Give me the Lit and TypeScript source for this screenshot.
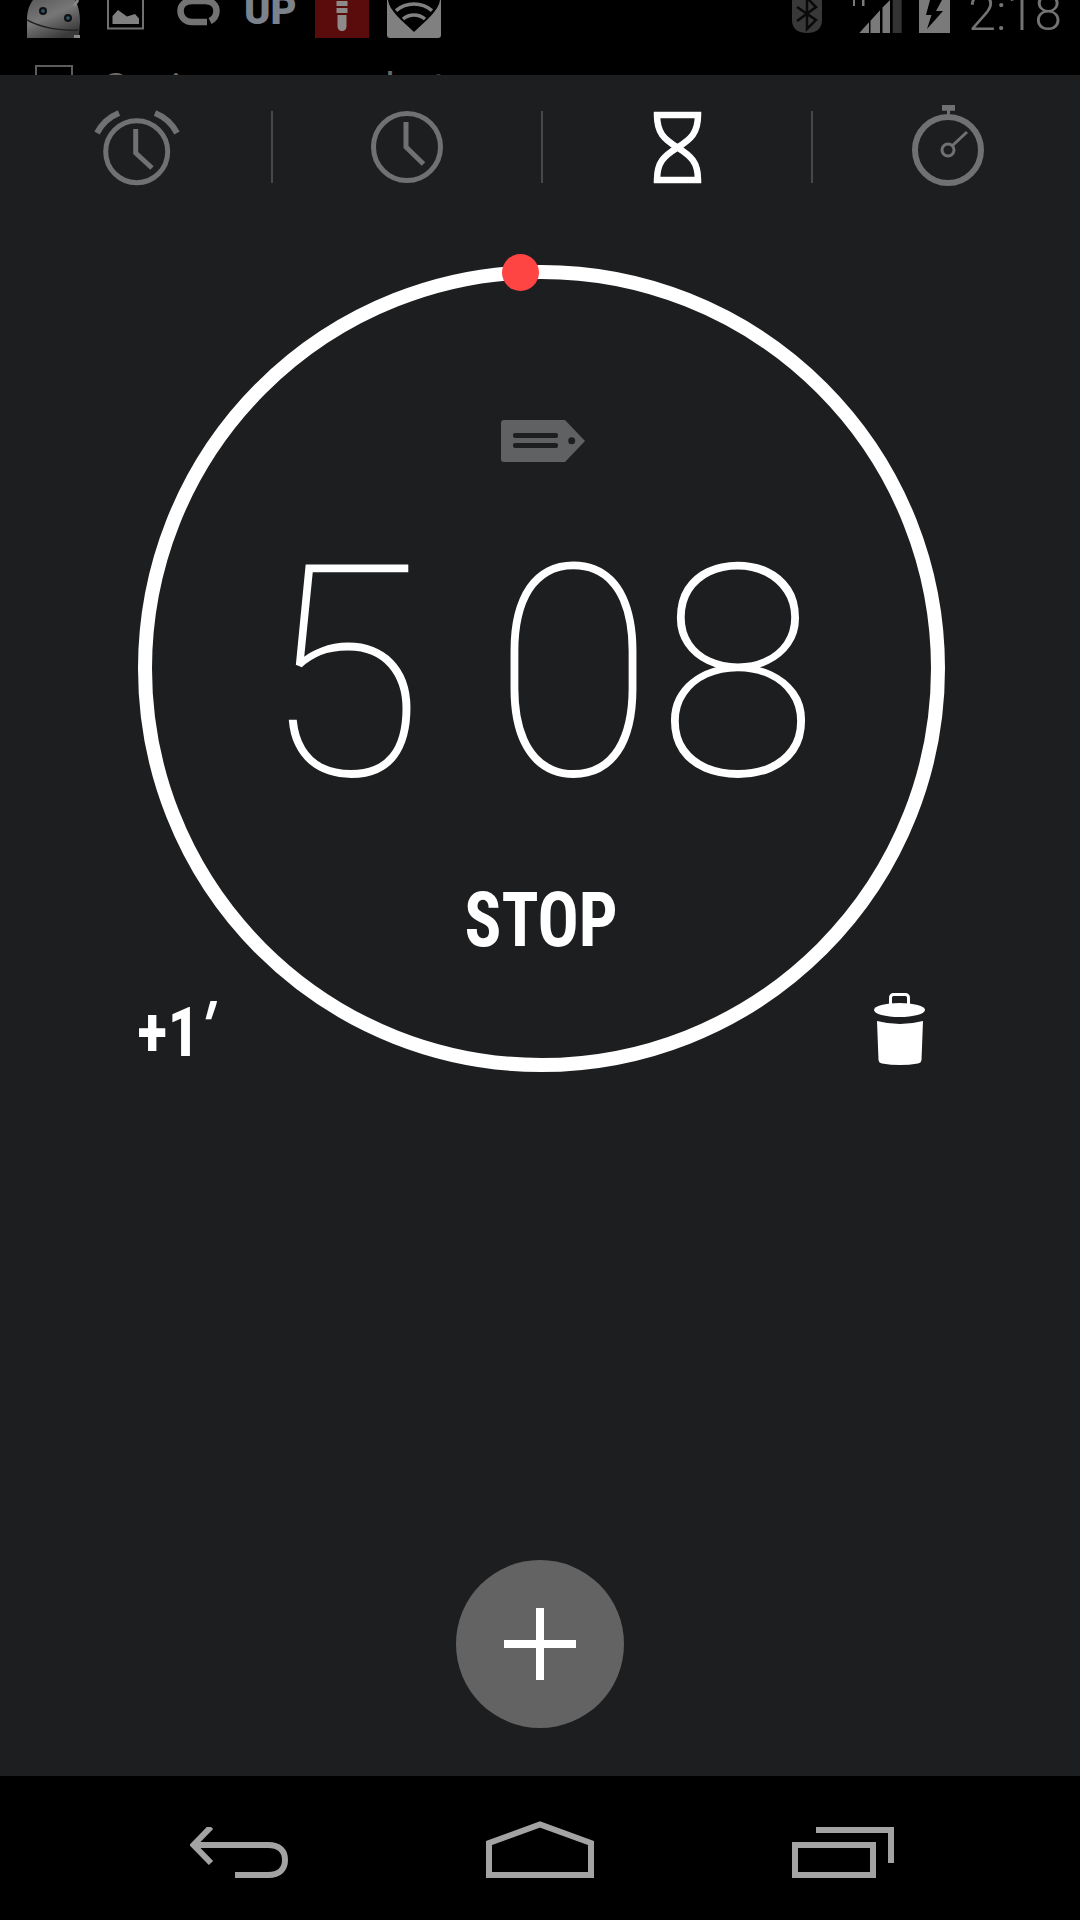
import { LitElement, html, css } from "lit";
import { customElement } from "lit/decorators.js";

@customElement("app-root")
export class AppRoot extends LitElement {
  static styles = css`
    :host {
      display: block;
      width: 1080px;
      height: 1920px;
      background: #000;
      font-family: Roboto, "Liberation Sans", sans-serif;
      overflow: hidden;
    }
    .page { display: flex; flex-direction: column; width: 1080px; height: 1920px; }
    svg { display: block; flex: none; overflow: hidden; }

    .status { height: 75px; flex: none; overflow: hidden; background: #000; }
    .icons { display: flex; align-items: flex-start; height: 38px; overflow: hidden; padding-left: 27px; }
    .android { width: 53px; height: 38px; }
    .picture { width: 37px; height: 30px; margin-left: 27px; }
    .ring { width: 43px; height: 26px; margin-left: 33px; }
    .up {
      width: 52px; margin-left: 24px; margin-top: -9px;
      font-size: 40px; line-height: 40px; font-weight: 900; color: #7c828c;
    }
    .red { width: 54px; height: 38px; margin-left: 19px; }
    .wifi { width: 54px; height: 38px; margin-left: 18px; }
    .right { display: flex; align-items: flex-start; margin-left: auto; padding-right: 18px; }
    .bt { width: 30px; height: 33px; }
    .signal { width: 52px; height: 33px; margin-left: 30px; }
    .battery { width: 31px; height: 33px; margin-left: 15px; }
    .clock {
      margin-left: 18px; margin-top: -12px;
      font-size: 50px; line-height: 50px; font-weight: 300; color: #737373;
    }
    .ghost { display: flex; align-items: flex-start; height: 37px; padding-left: 35px; padding-top: 27px; }
    .ghost .box { width: 34px; height: 34px; border: 2px solid #5c5c5c; flex: none; }
    .ghost .text {
      margin-left: 30px; margin-top: -1px;
      font-size: 42px; line-height: 50px; color: #6a6a6a; white-space: nowrap;
    }

    .main { flex: 1; display: flex; flex-direction: column; background: #1d1e20; }
    .tabs { display: flex; align-items: flex-start; padding: 27px 0 0 2.5px; height: 90px; flex: none; }
    .tab { flex: none; width: 268.33px; height: 90px; display: flex; justify-content: center; }
    .tab svg { width: 90px; height: 90px; }
    .divider { flex: none; width: 2px; height: 72px; margin-top: 9px; background: #47484a; }

    .dial {
      position: relative; box-sizing: border-box;
      width: 807px; height: 807px; margin: 73px 0 0 137.5px; flex: none;
      border: 14px solid #fff; border-radius: 50%;
      display: flex; flex-direction: column; align-items: center;
      padding-top: 141px; color: #fff;
    }
    .tag { width: 84px; height: 42px; margin-left: 3px; }
    .time {
      display: flex; gap: 66px; margin-top: 72px; margin-left: 1px;
      font-size: 296px; line-height: 280px; font-weight: 130; height: 280px; letter-spacing: 2px;
    }
    .stop {
      margin-top: 69px; font-size: 76px; line-height: 74px; font-weight: 700;
      font-stretch: 75%; transform: scaleX(0.9);
    }
    .dot {
      position: absolute; left: 350px; top: -25px;
      width: 37px; height: 37px; border-radius: 50%; background: #ff4444;
    }
    .plus1 {
      position: absolute; left: -15px; top: 722px;
      font-size: 68px; line-height: 65px; font-weight: 700; font-stretch: 75%;
      white-space: nowrap; transform: scaleX(0.94); transform-origin: left center;
    }
    .prime { display: inline-block; font-weight: 700; margin-left: 1px; transform: translateY(-4px) skewX(-16deg); }
    .trash { position: absolute; left: 718px; top: 711px; width: 60px; height: 80px; }

    .fab {
      width: 168px; height: 168px; border-radius: 50%; background: #636363;
      margin: auto 0 48px 456px; display: flex; align-items: center; justify-content: center; flex: none;
    }
    .fab svg { width: 72px; height: 72px; }

    .nav {
      height: 144px; flex: none; background: #000; display: flex; justify-content: center;
      align-items: flex-end; gap: 198px; padding: 0 0 42px 4px; box-sizing: border-box;
    }
    .back { width: 98px; height: 51px; }
    .home { width: 108px; height: 57px; }
    .recents { width: 102px; height: 51px; }
  `;

  render() {
    return html`
      <div class="page">
        <div class="status">
          <div class="icons">
            <svg class="android" viewBox="0 0 53 38">
              <defs>
                <linearGradient id="ag" x1="0" y1="0" x2="0.6" y2="1">
                  <stop offset="0" stop-color="#5a5a5a" /><stop offset="0.5" stop-color="#777" /><stop offset="1" stop-color="#3a3a3a" />
                </linearGradient>
              </defs>
              <path d="M0 38 V20 C0 10 3 4 6 0 H48 C51 5 53 12 53 22 L52 35 H47 V38 Z" fill="url(#ag)" />
              <path d="M0 20 C14 28 34 31 51 30" fill="none" stroke="#222" stroke-width="1.5" />
              <circle cx="16" cy="11" r="4" fill="#111" /><circle cx="16" cy="11" r="1.8" fill="#2d5a70" />
              <circle cx="41" cy="18" r="4" fill="#111" /><circle cx="41" cy="18" r="1.8" fill="#2d5a70" />
              <path d="M47 6 L51 0" stroke="#888" stroke-width="3" />
              <rect x="47" y="35" width="6" height="3" fill="#8a8a8a" />
            </svg>
            <svg class="picture" viewBox="0 0 37 30">
              <path d="M1 -2 V28.5 H36 V-2" fill="none" stroke="#707070" stroke-width="2" />
              <path d="M5.5 24 V16 L11 10 L20 16.5 L28 14 L32 18.5 V24 Z" fill="#808080" />
            </svg>
            <svg class="ring" viewBox="0 0 43 26">
              <path d="M30 22 H15 C8 22 3.5 17 3.5 11 C3.5 5 8 1 15 1 H28 C35 1 39.5 5 39.5 11 C39.5 16 37 19 33 21" fill="none" stroke="#737373" stroke-width="6.5" />
            </svg>
            <div class="up">UP</div>
            <svg class="red" viewBox="0 0 54 38">
              <rect width="54" height="38" fill="#5a0b0b" />
              <rect x="21.5" y="1" width="11" height="5" fill="#8f8a8a" />
              <rect x="21.5" y="8" width="11" height="5" fill="#8f8a8a" />
              <path d="M22.5 15 H31.5 V26 C31.5 30 29 31 27 31 C25 31 22.5 30 22.5 26 Z" fill="#8f8a8a" />
            </svg>
            <svg class="wifi" viewBox="0 0 54 38">
              <path d="M0 0 H54 V35 Q54 38 51 38 H3 Q0 38 0 35 Z" fill="#808080" />
              <path d="M1 0 H53 C52 10 40 20 27 32 C14 20 2 10 1 0 Z" fill="#000" />
              <path d="M9 10.6 A28 28 0 0 1 45 10.6 M16 19 A17 17 0 0 1 38 19" fill="none" stroke="#808080" stroke-width="3.5" />
            </svg>
            <div class="right">
              <svg class="bt" viewBox="0 0 30 33">
                <path d="M0 0 H30 V20 C30 29 24 33 15 33 C6 33 0 29 0 20 Z" fill="#383838" />
                <path d="M5 7 L24 20 L15 29 V-2 L24 7 L5 21" fill="none" stroke="#0a0a0a" stroke-width="2.5" />
              </svg>
              <svg class="signal" viewBox="0 0 52 33">
                <path d="M1 0 H3 V6 H1 Z M10 0 H12.5 V6 H10 Z" fill="#7a7a7a" />
                <path d="M7.3 33 L17 22.3 V33 Z M18.5 33 V20.7 L28 10.2 V33 Z M30.5 33 V7.4 L38 0 V33 Z" fill="#7a7a7a" />
                <rect x="40.7" width="9" height="33" fill="#333" />
              </svg>
              <svg class="battery" viewBox="0 0 31 33">
                <rect width="31" height="33" fill="#7a7a7a" />
                <path d="M11 0 H23 L17 11 H24 L8 29 L12.5 15 H7 Z" fill="#000" />
              </svg>
              <div class="clock">2:18</div>
            </div>
          </div>
          <div class="ghost">
            <div class="box"></div>
            <div class="text">Saving screenshot...</div>
          </div>
        </div>

        <div class="main">
          <div class="tabs">
            <div class="tab">
              <svg viewBox="0 0 90 90" fill="none" stroke="#707173">
                <circle cx="44.7" cy="49.7" r="31" stroke-width="5" />
                <path d="M43.7 27 V51 L60 66" stroke-width="5" />
                <path d="M27 11 A43 43 0 0 0 5 31 M63 11 A43 43 0 0 1 85 31" stroke-width="6" />
              </svg>
            </div>
            <div class="divider"></div>
            <div class="tab">
              <svg viewBox="0 0 90 90" fill="none" stroke="#707173">
                <circle cx="45" cy="45" r="33.5" stroke-width="5" />
                <path d="M44 20 V45 L61.5 62" stroke-width="5" />
              </svg>
            </div>
            <div class="divider"></div>
            <div class="tab">
              <svg viewBox="0 0 90 90" fill="none" stroke="#fff" stroke-width="6.5">
                <path d="M25 13 H66 C66 31 59 37 45.5 45.5 C59 54 66 60 66 78 H25 C25 60 32 54 45.5 45.5 C32 37 25 31 25 13 Z" />
              </svg>
            </div>
            <div class="divider"></div>
            <div class="tab">
              <svg viewBox="0 0 90 90" fill="none" stroke="#707173">
                <circle cx="45" cy="48" r="33" stroke-width="6" />
                <circle cx="45" cy="48" r="6" stroke-width="3" />
                <path d="M49.5 43.5 L64 30" stroke-width="3" />
                <path d="M39 3 H52 V8.7 H47 V12 H44 V8.7 H39 Z" fill="#707173" stroke="none" />
              </svg>
            </div>
          </div>

          <div class="dial">
            <svg class="tag" viewBox="0 0 84 42">
              <path d="M3 0 H64 L84 21 L64 42 H3 Q0 42 0 39 V3 Q0 0 3 0 Z" fill="#606163" />
              <rect x="12" y="13" width="45" height="5" rx="2" fill="#1d1e20" />
              <rect x="12" y="23" width="45" height="5" rx="2" fill="#1d1e20" />
              <circle cx="70.7" cy="20.7" r="3.5" fill="#1d1e20" />
            </svg>
            <div class="time"><span>5</span><span>08</span></div>
            <div class="stop">STOP</div>
            <div class="dot"></div>
            <div class="plus1">+1<span class="prime">′</span></div>
            <svg class="trash" viewBox="0 0 60 80" fill="#fff">
              <rect x="20.5" y="4.5" width="18" height="12" rx="3" fill="none" stroke="#fff" stroke-width="3" />
              <ellipse cx="29.5" cy="20" rx="25.5" ry="7" />
              <path d="M7 31 Q30 37 53 31 L51.5 70 Q51 73 48 73.5 Q30 76.5 12 73.5 Q9 73 8.5 70 Z" />
            </svg>
          </div>

          <div class="fab">
            <svg viewBox="0 0 72 72"><path d="M32 0 H40 V32 H72 V40 H40 V72 H32 V40 H0 V32 H32 Z" fill="#fff" /></svg>
          </div>
        </div>

        <div class="nav">
          <svg class="back" viewBox="0 0 98 51" fill="none" stroke="#a3a3a3" stroke-width="6">
            <path d="M21 0 L3.5 18 L21 36" />
            <path d="M5 18 H78 C90 18 95 24 95 33 C95 42 90 48 78 48 H45" />
          </svg>
          <svg class="home" viewBox="0 0 108 57" fill="none" stroke="#a3a3a3" stroke-width="6">
            <path d="M3 22 L54 3.5 L105 22 V54 H3 Z" />
          </svg>
          <svg class="recents" viewBox="0 0 102 51" fill="none" stroke="#a3a3a3" stroke-width="6">
            <rect x="3" y="18" width="78" height="30" />
            <path d="M24 3 H99 V36" />
          </svg>
        </div>
      </div>
    `;
  }
}
